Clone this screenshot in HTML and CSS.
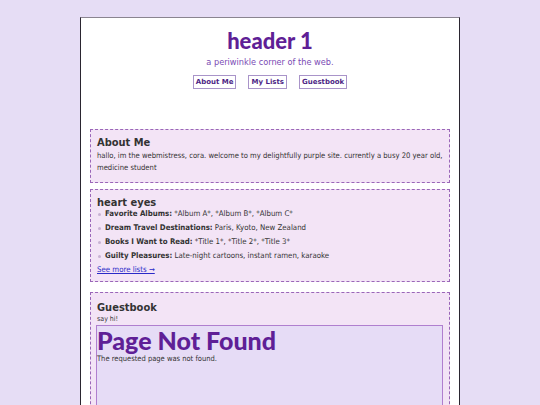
FILE: index.html
```html
<!DOCTYPE html>
<html>
<head>
<meta charset="utf-8">
<link rel="stylesheet" href="styles.css">
</head>
<body>
<div class="page">
  <header class="top">
    <h1 class="title">header 1</h1>
    <p class="tagline">a periwinkle corner of the web.</p>
    <nav class="nav">
      <a class="btn" href="#about">About Me</a>
      <a class="btn" href="#lists">My Lists</a>
      <a class="btn" href="#guest">Guestbook</a>
    </nav>
  </header>

  <section class="box about" id="about">
    <h2 class="box-title">About Me</h2>
    <p class="text">hallo, im the webmistress, cora. welcome to my delightfully purple site. currently a busy 20 year old, medicine student</p>
  </section>

  <section class="box lists" id="lists">
    <h2 class="box-title">heart eyes</h2>
    <ul class="list">
      <li><b>Favorite Albums:</b> *Album A*, *Album B*, *Album C*</li>
      <li><b>Dream Travel Destinations:</b> Paris, Kyoto, New Zealand</li>
      <li><b>Books I Want to Read:</b> *Title 1*, *Title 2*, *Title 3*</li>
      <li><b>Guilty Pleasures:</b> Late-night cartoons, instant ramen, karaoke</li>
    </ul>
    <a class="more" href="#">See more lists →</a>
  </section>

  <section class="box guest" id="guest">
    <h2 class="box-title">Guestbook</h2>
    <p class="small">say hi!</p>
    <div class="frame">
      <h1 class="nf-title">Page Not Found</h1>
      <p class="nf-text">The requested page was not found.</p>
    </div>
  </section>
</div>
</body>
</html>
```

FILE: styles.css
```css
html, body {
  margin: 0;
  padding: 0;
  background: #e6ddf5;
}
body {
  font-family: "DejaVu Sans", Verdana, sans-serif;
  color: #333;
  padding-top: 17px;
  height: 405px;
  overflow: hidden;
  box-sizing: border-box;
}
.page {
  width: 380px;
  margin: 0 auto;
  background: #fff;
  border: 1px solid #2a2530;
  border-top-color: #8a8490;
  padding: 0 9px 40px;
  box-sizing: border-box;
  min-height: 420px;
}
.top {
  box-sizing: border-box;
  text-align: center;
  padding-top: 9px;
  height: 111px;
}
.title {
  font-family: "Lato", sans-serif;
  font-weight: 900;
  font-size: 22px;
  color: #5f1f96;
  margin: 0;
  line-height: 28px;
}
.tagline {
  margin: 1px 0 0;
  font-size: 8.2px;
  color: #7a4bb4;
  line-height: 12px;
}
.nav {
  display: flex;
  justify-content: center;
  gap: 12px;
  margin-top: 7px;
}
.btn {
  font-size: 7px;
  font-weight: bold;
  color: #4d1f85;
  text-decoration: none;
  border: 1px solid #a994c9;
  padding: 1px 2px;
  line-height: 10px;
  background: #fff;
}
.box {
  background: #f3e4f6;
  border: 1px dashed #9a66b8;
  padding: 6px;
}
.about {
  padding-bottom: 8px;
  margin-bottom: 6px;
}
.lists {
  margin-bottom: 10px;
}
.box-title, .text, .list, .more, .small, .nf-text {
  font-family: "DejaVu Sans Condensed", "DejaVu Sans", sans-serif;
  font-stretch: condensed;
}
.box-title {
  font-size: 11px;
  margin: 0;
  line-height: 14px;
  color: #333;
}
.guest .box-title {
  margin-top: 2px;
}
.text {
  font-size: 7.6px;
  line-height: 12px;
  margin: 0;
}
.small {
  font-size: 7px;
  line-height: 8px;
  margin: 0;
}
.list {
  margin: -1px 0 0;
  padding-left: 0;
  list-style: none;
  font-size: 7.8px;
}
.list li {
  line-height: 10px;
  margin: 0 0 4px;
  padding-left: 8px;
  position: relative;
}
.list li::before {
  content: "";
  position: absolute;
  left: 1px;
  top: 4px;
  width: 3px;
  height: 3px;
  border-radius: 50%;
  background: #c9b3d4;
}
.more {
  display: block;
  width: max-content;
  font-size: 7.8px;
  color: #2a2ac8;
  line-height: 10px;
}
.frame {
  margin-top: 2px;
  margin-left: -1px;
  background: #e6dcf6;
  border: 1px solid #b07fcf;
  height: 100px;
}
.nf-title {
  font-family: "Lato", sans-serif;
  font-weight: 900;
  font-size: 25px;
  color: #5f1f96;
  margin: 0;
  line-height: 29px;
}
.nf-text {
  font-size: 7.5px;
  line-height: 8px;
  margin: 0;
}
```
